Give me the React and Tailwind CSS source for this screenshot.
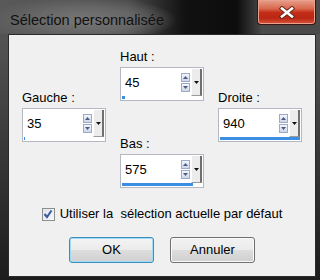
import React from 'react';

const font = "font-['Liberation_Sans',Arial,sans-serif]";

const ArrowBtn = ({ up }) => (
  <div className="w-[9px] h-[9px] border border-[#9eabc6] bg-[linear-gradient(180deg,#f4f7fc,#cdd7ea)] flex items-center justify-center">
    <svg width="5" height="3" viewBox="0 0 5 3">
      {up ? <path d="M0 3 L2.5 0 L5 3 Z" fill="#4b5b86" /> : <path d="M0 0 L2.5 3 L5 0 Z" fill="#4b5b86" />}
    </svg>
  </div>
);

const SpinBox = ({ value, bar }) => (
  <div className="w-[84px] h-[34px] border border-[#b3b8c2] bg-white flex flex-col p-px">
    <div className="flex flex-1 items-stretch">
      <div className="flex-1 flex items-center pl-[3px] text-[13px] text-black">{value}</div>
      <div className="flex flex-col justify-center gap-px mr-px">
        <ArrowBtn up />
        <ArrowBtn />
      </div>
      <div className="w-[11px] bg-[#ececec] border-l border-l-white border-r-2 border-r-[#6f6f6f] border-b border-b-[#9a9a9a] flex items-center justify-center">
        <svg width="5" height="3" viewBox="0 0 5 3">
          <path d="M0 0 L2.5 3 L5 0 Z" fill="#111" />
        </svg>
      </div>
    </div>
    <div className="h-[3px]">
      <div className="h-full bg-[#3b8fe3]" style={{ width: bar }} />
    </div>
  </div>
);

const Field = ({ label, value, bar }) => (
  <div className="flex flex-col">
    <div className="h-[18px] text-[13px] leading-[16px] text-black">{label}</div>
    <SpinBox value={value} bar={bar} />
  </div>
);

const Btn = ({ children, primary }) => (
  <button
    className={
      primary
        ? 'w-[85px] h-[26px] rounded-[3px] border border-[#3c8dbc] shadow-[inset_0_0_0_1px_#9fdcf6] bg-[linear-gradient(180deg,#f4f4f4_0%,#ebebeb_50%,#dddddd_51%,#cfcfcf_100%)] text-[13px] text-black'
        : 'w-[85px] h-[26px] rounded-[3px] border border-[#707070] shadow-[inset_0_0_0_1px_#fafafa] bg-[linear-gradient(180deg,#f2f2f2_0%,#ebebeb_50%,#dddddd_51%,#cfcfcf_100%)] text-[13px] text-black'
    }
  >
    {children}
  </button>
);

export default function App() {
  return (
    <div className={`${font} w-[320px] h-[280px] overflow-hidden flex flex-col bg-[linear-gradient(180deg,#5c5c5c_0%,#3e3e3e_45%,#1c1c1c_100%)]`}>
      {/* Title bar */}
      <div className="h-[34px] flex justify-between bg-[radial-gradient(ellipse_95px_24px_at_82px_20px,#777_0%,#666_55%,transparent_100%),linear-gradient(90deg,#595959_0%,#4a4a4a_40%,#111_58%,#0d0d0d_74%,#4a4a4a_82%,#4a4a4a_100%)]">
        <div className="pl-[10px] pt-[11px] text-[14.5px] leading-[18px] text-[#111]">Sélection personnalisée</div>
        <div className="mr-[4px] w-[59px] h-[25px] rounded-b-[4px] border border-[#3a1410] border-t-0 shadow-[inset_0_0_0_1px_#e9a08f] bg-[linear-gradient(180deg,#e8a08c_0%,#d86a50_35%,#c42e18_52%,#b92614_75%,#d9553a_100%)] flex items-center justify-center">
          <svg width="18" height="13" viewBox="0 0 18 13">
            <path d="M4 2.5 L14 10.5 M14 2.5 L4 10.5" stroke="#6a2418" strokeWidth="4.5" strokeLinecap="square" />
            <path d="M4 2.5 L14 10.5 M14 2.5 L4 10.5" stroke="#fff" strokeWidth="2.6" strokeLinecap="square" />
          </svg>
        </div>
      </div>

      {/* Client area */}
      <div className="ml-[8px] mr-[4px] h-[243px] border border-[#2a2a2a] bg-[#f0f0f0] flex flex-col">
        <div className="pl-[13px] grid grid-cols-[84px_84px_84px] gap-x-[14px]">
          <div className="pt-[55px]">
            <Field label="Gauche :" value="35" bar="1px" />
          </div>
          <div className="pt-[14px] flex flex-col gap-[35px]">
            <Field label="Haut :" value="45" bar="3px" />
            <Field label="Bas :" value="575" bar="71px" />
          </div>
          <div className="pt-[55px]">
            <Field label="Droite :" value="940" bar="100%" />
          </div>
        </div>

        <div className="mt-[18px] h-[16px] flex items-center justify-center gap-[5px]">
          <div className="w-[13px] h-[13px] border border-[#8e8f8f] bg-[linear-gradient(135deg,#dfe4ea,#f6f7f9)] flex items-center justify-center">
            <svg width="10" height="10" viewBox="0 0 10 10">
              <path d="M1.5 5 L4 8 L8.5 1.5" fill="none" stroke="#3a5a9e" strokeWidth="2" />
            </svg>
          </div>
          <span className="text-[13px] leading-[16px] text-black whitespace-pre">Utiliser la  sélection actuelle par défaut</span>
        </div>

        <div className="mt-[15px] flex justify-center gap-[16px]">
          <Btn primary>OK</Btn>
          <Btn>Annuler</Btn>
        </div>
      </div>
    </div>
  );
}
